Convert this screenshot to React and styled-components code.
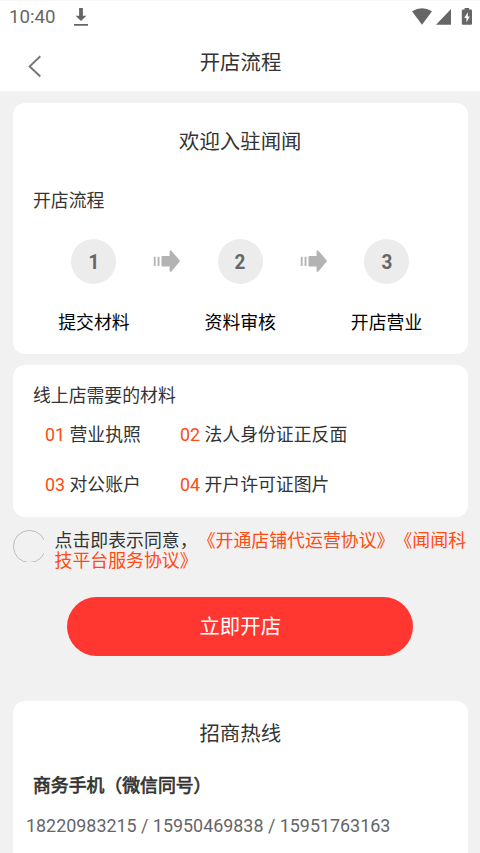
import React from "react";
import styled, { createGlobalStyle } from "styled-components";

const steps = ["提交材料", "资料审核", "开店营业"];

const materials = [
  ["营业执照", "法人身份证正反面"],
  ["对公账户", "开户许可证图片"],
];

const StepArrow = () => (
  <ArrowSvg viewBox="0 0 27 24">
    <path d="M.8 7.7h1.8v9.3H.8zM4.6 7.7h1.9v9.3H4.6z" />
    <path d="M9.4 7h7.2V2.4q.8-1.8 2-.5l7.8 9q.8 1.1 0 2.2l-7.8 9.2q-1.2 1.2-2-.4V17.6H9.4q-.9 0-.9-1V8q0-1 .9-1z" />
  </ArrowSvg>
);

const App = () => {
  return (
    <>
      <GlobalStyle />
      <Page>
        <StatusBar>
          <StatusLeft>
            <Clock>10:40</Clock>
            <DownloadSvg viewBox="0 0 14 19">
              <path d="M5.1 0h3.8v7.7h3.5L7 13.1 1.6 7.7h3.5zM0 16h14v1.8H0z" />
            </DownloadSvg>
          </StatusLeft>
          <StatusSvg viewBox="0 0 62 18">
            <path d="M0 3.3Q10-2.8 20 3.3L10 16.8z" />
            <path d="M39 1v15.7H24z" />
            <path d="M52.6 0h4.6v1.5H59q1 0 1 1v13.2q0 1-1 1h-8.2q-1 0-1-1V2.5q0-1 1-1h1.8z" />
            <path
              d="M55.8 4.2l-3.6 5.7h2.2v4.5l3.4-6h-2z"
              fill="#fff"
            />
          </StatusSvg>
        </StatusBar>

        <Header>
          <BackButton aria-label="返回">
            <BackSvg viewBox="0 0 14 23">
              <path d="M12.3 1.2L1.7 11.4l10.6 10.1" />
            </BackSvg>
          </BackButton>
          <HeaderTitle>开店流程</HeaderTitle>
        </Header>

        <Content>
          <FlowCard>
            <CardTitle>欢迎入驻闻闻</CardTitle>
            <SectionTitle>开店流程</SectionTitle>
            <Steps>
              {steps.map((step, index) => (
                <React.Fragment key={step}>
                  {index > 0 && <StepArrow />}
                  <Step>
                    <StepCircle>
                      <StepNumber>{index + 1}</StepNumber>
                    </StepCircle>
                    <StepLabel>{step}</StepLabel>
                  </Step>
                </React.Fragment>
              ))}
            </Steps>
          </FlowCard>

          <MaterialCard>
            <SectionTitle>线上店需要的材料</SectionTitle>
            <MaterialGrid>
              {materials.flat().map((name, index) => (
                <Material key={name}>
                  <MaterialIndex>0{index + 1}</MaterialIndex> {name}
                </Material>
              ))}
            </MaterialGrid>
          </MaterialCard>

          <Agreement>
            <Radio>
              <RadioRing />
            </Radio>
            <AgreementText>
              点击即表示同意，
              <AgreementLink>《开通店铺代运营协议》</AgreementLink>
              <AgreementLink>《闻闻科技平台服务协议》</AgreementLink>
            </AgreementText>
          </Agreement>

          <OpenButton>立即开店</OpenButton>

          <HotlineCard>
            <CardTitle>招商热线</CardTitle>
            <HotlineLabel>商务手机（微信同号）</HotlineLabel>
            <Phones>18220983215 / 15950469838 / 15951763163</Phones>
          </HotlineCard>
        </Content>
      </Page>
    </>
  );
};

const GlobalStyle = createGlobalStyle`
  * {
    box-sizing: border-box;
  }
  body {
    margin: 0;
    background-color: #f1f1f1;
    font-family: Roboto, "Noto Sans CJK SC", sans-serif;
    text-spacing-trim: space-all;
    overflow: hidden;
  }
`;

const Page = styled.div`
  width: 480px;
  height: 853px;
  overflow: hidden;
  color: #333;
  font-size: 17.85px;
`;

const StatusBar = styled.div`
  display: flex;
  justify-content: space-between;
  height: 34px;
  padding: 7px 6px 0 9px;
  background-color: #fff;
  border-top: 1px solid #f8f8f8;
`;

const StatusLeft = styled.div`
  display: flex;
`;

const Clock = styled.span`
  width: 65px;
  color: #666;
  font-size: 18.7px;
  line-height: 19px;
`;

const DownloadSvg = styled.svg`
  width: 14px;
  height: 19px;
  fill: #666;
`;

const StatusSvg = styled.svg`
  width: 62px;
  height: 18px;
  fill: #666;
`;

const Header = styled.header`
  display: grid;
  grid-template-columns: 60px 1fr 60px;
  height: 57px;
  background-color: #fff;
`;

const BackButton = styled.button`
  display: flex;
  padding: 21px 0 0 28px;
  border: none;
  background: none;
  cursor: pointer;
`;

const BackSvg = styled.svg`
  width: 14px;
  height: 23px;
  fill: none;
  stroke: #777;
  stroke-width: 2;
`;

const HeaderTitle = styled.h1`
  margin: 0;
  padding: 14px 0 0 1px;
  font-size: 20.4px;
  font-weight: 400;
  line-height: 30px;
  text-align: center;
`;

const Content = styled.main`
  display: flex;
  flex-direction: column;
  padding: 12px 13px 0;
`;

const Card = styled.section`
  flex-shrink: 0;
  width: 454.5px;
  background-color: #fff;
  border-radius: 12px;
`;

const FlowCard = styled(Card)`
  height: 251px;
  padding-top: 24px;
`;

const CardTitle = styled.h2`
  margin: 0;
  font-size: 20.4px;
  font-weight: 400;
  line-height: 30px;
  text-align: center;
`;

const SectionTitle = styled.h3`
  margin: 0;
  padding-left: 20px;
  font-size: 17.85px;
  font-weight: 400;
  line-height: 26px;

  ${CardTitle} + & {
    margin-top: 31px;
  }
`;

const Steps = styled.div`
  display: flex;
  padding: 25px 45px 0;
`;

const Step = styled.div`
  display: flex;
  flex-direction: column;
  align-items: center;
  width: 72px;
`;

const StepCircle = styled.div`
  display: flex;
  justify-content: center;
  align-items: center;
  width: 45px;
  height: 45px;
  border-radius: 50%;
  background-color: #ececec;
`;

const StepNumber = styled.span`
  color: #666;
  font-size: 21px;
  font-weight: 700;
  transform: scaleX(0.9);
`;

const StepLabel = styled.span`
  margin-top: 26px;
  color: #000;
  line-height: 26px;
  white-space: nowrap;
`;

const ArrowSvg = styled.svg`
  width: 27px;
  height: 24px;
  margin: 10px 24px 0 23.5px;
  fill: #b3b3b3;
`;

const MaterialCard = styled(Card)`
  height: 152.5px;
  margin-top: 10.5px;
  padding-top: 18.5px;
`;

const MaterialGrid = styled.div`
  display: grid;
  grid-template-columns: 135px 1fr;
  row-gap: 24.5px;
  padding: 12.5px 0 0 32px;
`;

const Material = styled.div`
  line-height: 26px;
  white-space: nowrap;
`;

const MaterialIndex = styled.span`
  color: #ff4b12;
`;

const Agreement = styled.div`
  display: flex;
  padding-top: 12px;
`;

// the ring is slightly larger than its box, so its edges are cut off
const Radio = styled.div`
  flex-shrink: 0;
  width: 31px;
  height: 31.5px;
  margin-top: 1px;
  overflow: hidden;
`;

const RadioRing = styled.div`
  width: 32.5px;
  height: 32.5px;
  border: 1.5px solid #bbb;
  border-radius: 50%;
`;

const AgreementText = styled.p`
  width: 415px;
  margin: 1.5px 0 0 10.5px;
  font-size: 17.9px;
  line-height: 20.8px;
`;

const AgreementLink = styled.span`
  color: #ff4b12;
  cursor: pointer;
`;

const OpenButton = styled.button`
  align-self: center;
  flex-shrink: 0;
  width: 346px;
  height: 59px;
  margin: 25px 0 0 0.5px;
  padding: 0 0 3px;
  border: none;
  border-radius: 99px;
  background-color: #ff3730;
  color: #fff;
  font-family: inherit;
  font-size: 20.4px;
  cursor: pointer;
`;

const HotlineCard = styled(Card)`
  height: 200px;
  margin-top: 45px;
  padding-top: 17.5px;
`;

// regular glyphs thickened by a stroke: lighter than the real bold cut
const HotlineLabel = styled.h3`
  margin: 24px 0 0;
  padding-left: 20px;
  font-size: 17.85px;
  font-weight: 400;
  line-height: 26px;
  -webkit-text-stroke: 0.7px #333;
`;

const Phones = styled.p`
  margin: 14px 0 0;
  padding-left: 13px;
  color: #666;
  font-size: 17.9px;
  line-height: 26px;
`;

export default App;
